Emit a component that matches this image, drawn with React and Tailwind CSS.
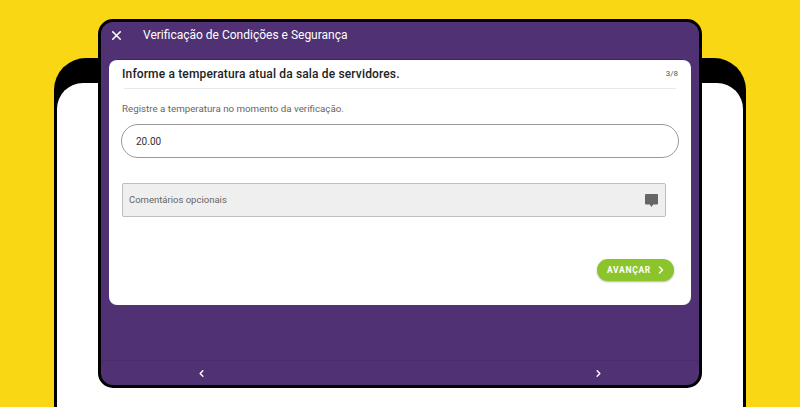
import { FiChevronLeft, FiChevronRight, FiX } from 'react-icons/fi'

const App = () => {
  return (
    <div className="relative h-[407px] w-[800px] overflow-hidden bg-[#fad714] font-['Roboto',sans-serif]">
      {/* Device behind */}
      <div className="ml-[54px] mt-[58px] h-[400px] w-[692px] rounded-t-[32px] bg-black px-[3px] pt-[25px]">
        <div className="h-full rounded-t-[26px] bg-white" />
      </div>

      {/* Modal */}
      <div className="absolute left-[98px] top-[19px] flex h-[369px] w-[604px] flex-col rounded-[15px] border-[3px] border-black bg-[#503173]">
        <header className="flex h-[37px] shrink-0 items-center pb-[11px] text-white">
          <FiX className="ml-[8px] h-[15px] w-[15px]" strokeWidth={2.5} />
          <h1 className="ml-[19px] text-[12px] leading-none">Verificação de Condições e Segurança</h1>
        </header>

        <main className="mx-[8px] flex h-[246px] shrink-0 flex-col rounded-[8px] border-t border-[#42206f] bg-white px-[12px]">
          <div className="flex h-[28px] shrink-0 items-center justify-between text-[#222]">
            <h2 className="ml-px text-[12px] font-medium leading-none tracking-[0.15px]">Informe a temperatura atual da sala de servidores.</h2>
            <span className="mr-[1px] text-[8px] leading-none text-[#555]">3/8</span>
          </div>
          <div className="mx-[3px] h-px shrink-0 bg-[#e8e8e8]" />

          <p className="ml-px mt-[14px] text-[9.75px] leading-[12px] text-[#666]">Registre a temperatura no momento da verificação.</p>

          <div className="mt-[9px] flex h-[34px] w-[558px] shrink-0 items-center rounded-full border-[1.5px] border-[#999] pl-[14px] text-[10px] text-[#333]">
            20.00
          </div>

          <div className="ml-px mt-[25px] flex h-[34px] w-[544px] shrink-0 items-center justify-between rounded-[2px] border border-[#bdbdbd] bg-[#efefef] pl-[6px] pr-[7px] text-[9.5px] text-[#666]">
            <span>Comentários opcionais</span>
            <svg viewBox="0 0 13 13" className="h-[13px] w-[13px] fill-[#666]">
              <path d="M1 0h11a1 1 0 0 1 1 1v8.5a1 1 0 0 1-1 1H8.2L6.5 13 4.8 10.5H1a1 1 0 0 1-1-1V1a1 1 0 0 1 1-1z" />
            </svg>
          </div>

          <div className="mt-[42px] flex justify-end pr-[5px]">
            <button className="flex h-[22px] w-[77px] items-center gap-[4px] rounded-full bg-[#8cc42c] pl-[10px] text-[8.5px] font-bold tracking-[0.7px] text-white shadow-[0_1px_2px_rgba(0,0,0,0.3)]">
              AVANÇAR
              <FiChevronRight className="h-[12px] w-[12px]" strokeWidth={3} />
            </button>
          </div>
        </main>

        {/* Footer arrows */}
        <footer className="mt-auto flex h-[25px] shrink-0 items-center justify-between border-t border-[#4a2c6b] pl-[95px] pr-[95px] text-white">
          <FiChevronLeft className="h-[11px] w-[11px]" strokeWidth={3} />
          <FiChevronRight className="h-[11px] w-[11px]" strokeWidth={3} />
        </footer>
      </div>
    </div>
  )
}

export default App
